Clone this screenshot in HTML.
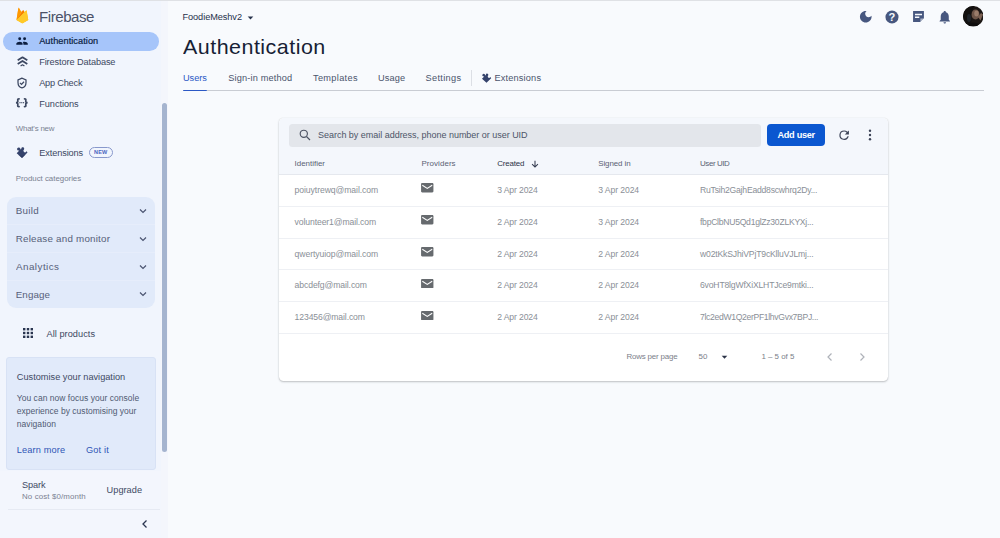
<!DOCTYPE html>
<html lang="en">
<head>
<meta charset="utf-8">
<title>Authentication - FoodieMeshv2 - Firebase console</title>
<style>
*{box-sizing:border-box;margin:0;padding:0}
html,body{width:1000px;height:538px;overflow:hidden}
body{font-family:"Liberation Sans",Arial,sans-serif;background:#f8fafd;color:#1f2a44;position:relative;font-size:9px}
.abs{position:absolute}
.t{position:absolute;white-space:nowrap;line-height:1;transform-origin:0 50%;z-index:3}
.topline{position:absolute;left:0;top:0;width:1000px;height:1px;background:#dfe1e5;z-index:5}
.side{position:absolute;left:0;top:0;width:168px;height:538px;background:#f1f5fd}
.track{position:absolute;left:161px;top:0;width:7px;height:538px;background:#f4f6fc}
.pill{position:absolute;left:2.7px;top:32px;width:156.2px;height:18.6px;border-radius:9.3px;background:#a6c5fa}
.cats{position:absolute;left:7px;top:197px;width:147.500px;height:111px;border-radius:9px;background:#e1eafa}
.catline{position:absolute;left:0;width:147.500px;height:1px;background:#e6edfb}
.scroll{position:absolute;left:161.5px;top:103px;width:5.4px;height:349px;background:#a5b4cf;border-radius:3px}
.card{position:absolute;left:6px;top:357px;width:150px;height:113px;border-radius:3px;background:#e1eafa;border:1px solid #d8e2f5}
.sfoot{position:absolute;left:0;top:471px;width:161px;height:67px;background:#f3f6fd}
.tabline{position:absolute;left:183px;top:90px;width:801px;height:1px;background:#c9ccd3}
.tabind{position:absolute;left:183px;top:89.5px;width:24px;height:1.5px;background:#2b58c5;border-radius:1.5px 1.5px 0 0}
.tcard{position:absolute;left:279px;top:118px;width:609px;height:262.800px;background:#fff;border-radius:4.500px;box-shadow:0 1px 2px rgba(60,64,67,.3),0 0 1px rgba(60,64,67,.18)}
.thead{position:absolute;left:0;top:0;width:609px;height:57px;background:#f4f7fc;border-radius:5px 5px 0 0;border-bottom:1px solid #e5e8ee}
.search{position:absolute;left:10.200px;top:5.800px;width:472px;height:23.500px;border-radius:3.500px;background:#e3e6eb}
.btn{position:absolute;left:488.200px;top:5.700px;width:58.200px;height:22.800px;border-radius:4px;background:#0b57d0}
.rowline{position:absolute;left:279px;width:609px;height:1px;background:#eef0f4}
</style>
</head>
<body>
<div class="topline"></div>
<div class="side">
<svg class="abs" style="left:16px;top:7.300px" width="12.500" height="16.700" viewBox="0 0 24 32">
<path d="M1 25 L4.500 2.200 L9.800 9.300 L13.900 6.200 L16.500 10 L20 6.600 L23.500 25 L12.200 31.300z" fill="#ffa611"/>
<path d="M1 25 L4.500 2.200 c.1-.8 1.100-1 1.500-.3 L10 9 z" fill="#ff9800"/>
<path d="M1 25 L13.200 6.600 c.3-.6 1.100-.6 1.400 0 L16.500 10 z" fill="#f57c00"/>
<path d="M1 25 L19.300 6.800 c.5-.5 1.300-.2 1.400.5 L23.500 25 13.200 31 c-.6.3-1.300.3-1.900 0 z" fill="#ffca28"/>
</svg>
<div class="pill"></div>
<svg class="abs" style="left:16px;top:36.800px" width="12" height="8" viewBox="0 0 12 8" fill="#0b1d3f"><circle cx="3.700" cy="1.800" r="1.450"/><circle cx="8.600" cy="1.800" r="1.450"/><path d="M.3 7.800 V6.800 C.3 5.400 2.400 4.700 3.700 4.700 S6.600 5.400 6.600 6.800 V7.800z"/><path d="M7.400 7.800 V6.700 C7.400 6 7.100 5.500 6.700 5.100 C7.300 4.800 8 4.700 8.600 4.700 C9.900 4.700 11.800 5.400 11.800 6.800 V7.800z"/></svg>
<svg class="abs" style="left:16.500px;top:55.800px" width="11" height="11" viewBox="0 0 11 11" fill="none" stroke="#3c4761" stroke-width="1.750" stroke-linejoin="round"><path d="M.7 4.300 L5.500 1.300 L10.300 4.300"/><path d="M.7 7.900 L5.500 4.900 L10.300 7.900"/><path d="M3.600 10 L5.500 8.800 L7.400 10" stroke-width="1.300"/></svg>
<svg class="abs" style="left:16px;top:77px" width="12" height="12" viewBox="0 0 24 24"><path fill="none" stroke="#3c4761" stroke-width="2.500" d="M12 2.200 L4 5.700 V11 c0 5 3.400 9.700 8 10.900 4.600-1.200 8-5.900 8-10.900 V5.700 z"/><path fill="none" stroke="#3c4761" stroke-width="2.500" d="M8 11.800 l3 3 5-5.300"/></svg>
<svg class="abs" style="left:15.400px;top:98.300px" width="13.600" height="9.400" viewBox="0 0 13 9" fill="none" stroke="#3c4761" stroke-width="1.600" stroke-linecap="round"><path d="M3.900 .8 C2 .8 2.700 1.600 2.700 3 C2.700 4 1.900 4.500 .9 4.500 C1.900 4.500 2.700 5 2.700 6 C2.700 7.400 2 8.200 3.900 8.200"/><path d="M9.100 .8 C11 .8 10.300 1.600 10.300 3 C10.300 4 11.100 4.500 12.100 4.500 C11.100 4.500 10.300 5 10.300 6 C10.300 7.400 11 8.200 9.100 8.200"/><g fill="#3c4761" stroke="none"><circle cx="4.800" cy="4.500" r=".65"/><circle cx="6.500" cy="4.500" r=".65"/><circle cx="8.200" cy="4.500" r=".65"/></g></svg>
<svg class="abs" style="left:12px;top:143px" width="20" height="20" viewBox="0 0 20 20"><path fill="#35436c" d="M4.700 10.200 L7.300 7.600 C5.600 7.800 4.600 6.400 5.300 5.200 C6 4 7.800 4.100 8.300 5.600 L8.600 6.500 L9.300 5.900 C9.100 4.600 10.200 3.900 11.200 4.300 C12.500 4.800 12.500 6.300 11.400 7.200 C11.600 8.800 12.400 9.600 13.300 9.400 L14.600 8.300 L15.500 9.600 L10 15 z"/><path fill="#27335a" d="M6.500 11.900 L10 15 L13.500 11.700 L10 13z" opacity=".6"/></svg>
<div class="abs" style="left:88.700px;top:147.200px;width:24px;height:10.500px;border:1px solid #8898cc;border-radius:6px;font-size:5.500px;font-weight:bold;color:#4a62c0;text-align:center;line-height:8.500px;letter-spacing:.2px">NEW</div>
<div class="cats">
<div class="catline" style="top:27px"></div>
<div class="catline" style="top:55px"></div>
<div class="catline" style="top:83px"></div>
<svg class="abs" style="left:131px;top:9px" width="10" height="10" viewBox="0 0 10 10" fill="none" stroke="#4a5470" stroke-width="1.200"><path d="M2 3.500 L5 6.500 L8 3.500"/></svg>
<svg class="abs" style="left:131px;top:36.500px" width="10" height="10" viewBox="0 0 10 10" fill="none" stroke="#4a5470" stroke-width="1.200"><path d="M2 3.500 L5 6.500 L8 3.500"/></svg>
<svg class="abs" style="left:131px;top:64.500px" width="10" height="10" viewBox="0 0 10 10" fill="none" stroke="#4a5470" stroke-width="1.200"><path d="M2 3.500 L5 6.500 L8 3.500"/></svg>
<svg class="abs" style="left:131px;top:92px" width="10" height="10" viewBox="0 0 10 10" fill="none" stroke="#4a5470" stroke-width="1.200"><path d="M2 3.500 L5 6.500 L8 3.500"/></svg>
</div>
<svg class="abs" style="left:22px;top:327px" width="12" height="12" viewBox="0 0 12 12" fill="#2a3550"><rect x="1" y="1" width="2.400" height="2.400"/><rect x="4.800" y="1" width="2.400" height="2.400"/><rect x="8.600" y="1" width="2.400" height="2.400"/><rect x="1" y="4.800" width="2.400" height="2.400"/><rect x="4.800" y="4.800" width="2.400" height="2.400"/><rect x="8.600" y="4.800" width="2.400" height="2.400"/><rect x="1" y="8.600" width="2.400" height="2.400"/><rect x="4.800" y="8.600" width="2.400" height="2.400"/><rect x="8.600" y="8.600" width="2.400" height="2.400"/></svg>
<div class="sfoot"></div><div class="card"></div>
<div class="abs" style="left:8px;top:509px;width:152px;height:1px;background:#e6eaf3"></div>
<svg class="abs" style="left:139.500px;top:519px" width="10" height="10" viewBox="0 0 10 10" fill="none" stroke="#2a3550" stroke-width="1.300"><path d="M6.500 1.500 L3 5 L6.500 8.500"/></svg>
<div class="track"></div><div class="scroll"></div>
</div>
<div class="t" id="t0" style="left:38.50px;top:9.35px;font-size:15.2px;color:#4b5268;letter-spacing:-0.450px;transform:scaleX(0.9921);">Firebase</div>
<div class="t" id="t1" style="left:39.20px;top:36.95px;font-size:9.2px;color:#0b1d3f;letter-spacing:0.059px;-webkit-text-stroke:.2px #0b1d3f;">Authentication</div>
<div class="t" id="t2" style="left:39.20px;top:57.85px;font-size:9.2px;color:#3c4761;letter-spacing:-0.108px;">Firestore Database</div>
<div class="t" id="t3" style="left:39.20px;top:78.85px;font-size:9.2px;color:#3c4761;letter-spacing:-0.207px;">App Check</div>
<div class="t" id="t4" style="left:39.20px;top:99.65px;font-size:9.2px;color:#3c4761;letter-spacing:-0.043px;">Functions</div>
<div class="t" id="t5" style="left:15.70px;top:124.62px;font-size:7.9px;color:#7a8191;letter-spacing:-0.194px;">What&#x27;s new</div>
<div class="t" id="t6" style="left:39.20px;top:148.55px;font-size:9.2px;color:#3c4761;letter-spacing:-0.106px;">Extensions</div>
<div class="t" id="t7" style="left:15.70px;top:175.22px;font-size:7.9px;color:#7a8191;letter-spacing:-0.017px;">Product categories</div>
<div class="t" id="t8" style="left:15.70px;top:205.64px;font-size:9.8px;color:#566079;letter-spacing:0.301px;">Build</div>
<div class="t" id="t9" style="left:15.70px;top:233.84px;font-size:9.8px;color:#566079;letter-spacing:0.216px;">Release and monitor</div>
<div class="t" id="t10" style="left:15.70px;top:261.54px;font-size:9.8px;color:#566079;letter-spacing:0.450px;transform:scaleX(1.0046);">Analytics</div>
<div class="t" id="t11" style="left:15.70px;top:289.64px;font-size:9.8px;color:#566079;letter-spacing:0.104px;">Engage</div>
<div class="t" id="t12" style="left:46.50px;top:329.65px;font-size:9.2px;color:#3c4761;letter-spacing:0.044px;">All products</div>
<div class="t" id="t13" style="left:16.80px;top:373.15px;font-size:9.2px;color:#3e4963;letter-spacing:0.006px;">Customise your navigation</div>
<div class="t" id="t14" style="left:16.80px;top:393.61px;font-size:8.5px;color:#505a72;letter-spacing:0.027px;">You can now focus your console</div>
<div class="t" id="t15" style="left:16.80px;top:406.81px;font-size:8.5px;color:#505a72;letter-spacing:0.019px;">experience by customising your</div>
<div class="t" id="t16" style="left:16.80px;top:419.81px;font-size:8.5px;color:#505a72;letter-spacing:0.048px;">navigation</div>
<div class="t" id="t17" style="left:16.80px;top:446.05px;font-size:9.2px;color:#2f55b5;letter-spacing:0.135px;">Learn more</div>
<div class="t" id="t18" style="left:86.00px;top:446.05px;font-size:9.2px;color:#2f55b5;letter-spacing:0.146px;">Got it</div>
<div class="t" id="t19" style="left:22.00px;top:480.75px;font-size:9.2px;color:#3e4963;letter-spacing:-0.129px;">Spark</div>
<div class="t" id="t20" style="left:22.00px;top:492.92px;font-size:7.9px;color:#7a8191;letter-spacing:0.124px;">No cost $0/month</div>
<div class="t" id="t21" style="left:106.60px;top:486.15px;font-size:9.2px;color:#3e4963;letter-spacing:0.025px;">Upgrade</div>
<div class="t" id="t22" style="left:182.50px;top:13.25px;font-size:9.2px;color:#27324b;letter-spacing:-0.070px;">FoodieMeshv2</div>
<div class="t" id="t23" style="left:182.50px;top:37.16px;font-size:20.4px;color:#171e35;letter-spacing:0.450px;transform:scaleX(1.0534);">Authentication</div>
<div class="t" id="t24" style="left:183.00px;top:74.25px;font-size:9.2px;color:#2b58c5;letter-spacing:-0.050px;">Users</div>
<div class="t" id="t25" style="left:228.20px;top:74.25px;font-size:9.2px;color:#4a546c;letter-spacing:0.169px;">Sign-in method</div>
<div class="t" id="t26" style="left:313.00px;top:74.25px;font-size:9.2px;color:#4a546c;letter-spacing:0.328px;">Templates</div>
<div class="t" id="t27" style="left:378.00px;top:74.25px;font-size:9.2px;color:#4a546c;letter-spacing:0.109px;">Usage</div>
<div class="t" id="t28" style="left:425.50px;top:74.25px;font-size:9.2px;color:#4a546c;letter-spacing:0.328px;">Settings</div>
<div class="t" id="t29" style="left:494.50px;top:74.25px;font-size:9.2px;color:#4a546c;letter-spacing:0.172px;">Extensions</div>
<div class="t" id="t30" style="left:318.00px;top:131.35px;font-size:9.0px;color:#4d5568;letter-spacing:-0.021px;">Search by email address, phone number or user UID</div>
<div class="t" id="t31" style="left:777.40px;top:131.25px;font-size:9.2px;color:#ffffff;letter-spacing:-0.290px;font-weight:bold;">Add user</div>
<div class="t" id="t32" style="left:294.60px;top:159.89px;font-size:7.95px;color:#5a6274;letter-spacing:-0.006px;">Identifier</div>
<div class="t" id="t33" style="left:421.40px;top:159.89px;font-size:7.95px;color:#5a6274;letter-spacing:0.084px;">Providers</div>
<div class="t" id="t34" style="left:497.20px;top:159.89px;font-size:7.95px;color:#2c3448;letter-spacing:-0.175px;">Created</div>
<div class="t" id="t35" style="left:598.20px;top:159.89px;font-size:7.95px;color:#5a6274;letter-spacing:-0.089px;">Signed in</div>
<div class="t" id="t36" style="left:700.00px;top:159.89px;font-size:7.95px;color:#5a6274;letter-spacing:-0.406px;">User UID</div>
<div class="t" id="t37" style="left:294.60px;top:186.13px;font-size:8.65px;color:#8a8f97;letter-spacing:-0.077px;">poiuytrewq@mail.com</div>
<div class="t" id="t38" style="left:497.20px;top:186.13px;font-size:8.65px;color:#8a8f97;letter-spacing:-0.126px;">3 Apr 2024</div>
<div class="t" id="t39" style="left:598.20px;top:186.13px;font-size:8.65px;color:#8a8f97;letter-spacing:-0.082px;">3 Apr 2024</div>
<div class="t" id="t40" style="left:700.00px;top:186.13px;font-size:8.65px;color:#8a8f97;letter-spacing:-0.227px;">RuTsih2GajhEadd8scwhrq2Dy...</div>
<div class="t" id="t41" style="left:294.60px;top:217.93px;font-size:8.65px;color:#8a8f97;letter-spacing:-0.108px;">volunteer1@mail.com</div>
<div class="t" id="t42" style="left:497.20px;top:217.93px;font-size:8.65px;color:#8a8f97;letter-spacing:-0.126px;">2 Apr 2024</div>
<div class="t" id="t43" style="left:598.20px;top:217.93px;font-size:8.65px;color:#8a8f97;letter-spacing:-0.082px;">3 Apr 2024</div>
<div class="t" id="t44" style="left:700.00px;top:217.93px;font-size:8.65px;color:#8a8f97;letter-spacing:-0.277px;">fbpClbNU5Qd1glZz30ZLKYXj...</div>
<div class="t" id="t45" style="left:294.60px;top:249.73px;font-size:8.65px;color:#8a8f97;letter-spacing:-0.077px;">qwertyuiop@mail.com</div>
<div class="t" id="t46" style="left:497.20px;top:249.73px;font-size:8.65px;color:#8a8f97;letter-spacing:-0.126px;">2 Apr 2024</div>
<div class="t" id="t47" style="left:598.20px;top:249.73px;font-size:8.65px;color:#8a8f97;letter-spacing:-0.082px;">2 Apr 2024</div>
<div class="t" id="t48" style="left:700.00px;top:249.73px;font-size:8.65px;color:#8a8f97;letter-spacing:-0.178px;">w02tKkSJhiVPjT9cKlluVJLmj...</div>
<div class="t" id="t49" style="left:294.60px;top:281.43px;font-size:8.65px;color:#8a8f97;letter-spacing:-0.104px;">abcdefg@mail.com</div>
<div class="t" id="t50" style="left:497.20px;top:281.43px;font-size:8.65px;color:#8a8f97;letter-spacing:-0.126px;">2 Apr 2024</div>
<div class="t" id="t51" style="left:598.20px;top:281.43px;font-size:8.65px;color:#8a8f97;letter-spacing:-0.082px;">2 Apr 2024</div>
<div class="t" id="t52" style="left:700.00px;top:281.43px;font-size:8.65px;color:#8a8f97;letter-spacing:-0.184px;">6voHT8lgWfXiXLHTJce9mtki...</div>
<div class="t" id="t53" style="left:294.60px;top:313.23px;font-size:8.65px;color:#8a8f97;letter-spacing:-0.118px;">123456@mail.com</div>
<div class="t" id="t54" style="left:497.20px;top:313.23px;font-size:8.65px;color:#8a8f97;letter-spacing:-0.126px;">2 Apr 2024</div>
<div class="t" id="t55" style="left:598.20px;top:313.23px;font-size:8.65px;color:#8a8f97;letter-spacing:-0.082px;">2 Apr 2024</div>
<div class="t" id="t56" style="left:700.00px;top:313.23px;font-size:8.65px;color:#8a8f97;letter-spacing:-0.338px;">7lc2edW1Q2erPF1lhvGvx7BPJ...</div>
<div class="t" id="t57" style="left:626.40px;top:352.69px;font-size:7.95px;color:#7b808a;letter-spacing:-0.183px;">Rows per page</div>
<div class="t" id="t58" style="left:698.40px;top:352.69px;font-size:7.95px;color:#7b808a;letter-spacing:0.156px;">50</div>
<div class="t" id="t59" style="left:761.40px;top:352.69px;font-size:7.95px;color:#7b808a;letter-spacing:-0.012px;">1 – 5 of 5</div>
<svg class="abs" style="left:246.500px;top:15.800px" width="7" height="4" viewBox="0 0 8 5"><path fill="#27324b" d="M.5 .5 h7 L4 4.500z"/></svg>
<div class="abs" style="left:470.800px;top:69.500px;width:1px;height:16px;background:#dcdfe5"></div>
<svg class="abs" style="left:478.200px;top:70.200px" width="17" height="17" viewBox="0 0 20 20"><path fill="#35436c" d="M4.700 10.200 L7.300 7.600 C5.600 7.800 4.600 6.400 5.300 5.200 C6 4 7.800 4.100 8.300 5.600 L8.600 6.500 L9.300 5.900 C9.100 4.600 10.200 3.900 11.200 4.300 C12.500 4.800 12.500 6.300 11.400 7.200 C11.600 8.800 12.400 9.600 13.300 9.400 L14.600 8.300 L15.500 9.600 L10 15 z"/></svg>
<div class="tabline"></div><div class="tabind"></div>
<svg class="abs" style="left:858.300px;top:9.200px" width="15.500" height="15.500" viewBox="0 0 24 24"><path fill="#47577f" d="M12 3c-4.970 0-9 4.030-9 9s4.030 9 9 9 9-4.030 9-9c0-.46-.04-.92-.1-1.360-.98 1.370-2.580 2.260-4.400 2.260-2.980 0-5.400-2.420-5.400-5.400 0-1.810.89-3.420 2.260-4.400-.44-.06-.9-.1-1.360-.1z"/></svg>
<svg class="abs" style="left:885px;top:10px" width="14" height="14" viewBox="0 0 24 24"><circle cx="12" cy="12" r="11.200" fill="#47577f"/><text x="12" y="18.700" text-anchor="middle" font-family="Liberation Sans, sans-serif" font-weight="bold" font-size="19" fill="#f8fafd">?</text></svg>
<svg class="abs" style="left:912px;top:10px" width="13" height="13" viewBox="0 0 24 24"><path fill="#47577f" d="M2 2 h20 v13 l-7 7 H2 z"/><path fill="#f8fafd" d="M5.500 7 h13 v2.600 h-13 z M5.500 12 h8 v2.600 h-8 z"/><path fill="#f8fafd" d="M15.500 21.500 v-6 h6 z" opacity=".55"/></svg>
<svg class="abs" style="left:938.500px;top:9.700px" width="11.500" height="14.500" viewBox="0 0 20 24"><path fill="#47577f" d="M10 23 c1.200 0 2.200-1 2.200-2.200 H7.800 c0 1.200 1 2.200 2.200 2.200 z M17 16.500 V10.500 c0-3.400-1.800-6.200-5-7 V2.800 c0-1-.9-1.800-2-1.800 s-2 .8-2 1.800 v.7 c-3.200 .8-5 3.600-5 7 v6 L1 18.500 v1.100 h18 v-1.100 z"/></svg>
<svg class="abs" style="left:962.700px;top:6px" width="20.500" height="20.500" viewBox="0 0 41 41"><defs><clipPath id="av"><circle cx="20.500" cy="20.500" r="20.500"/></clipPath></defs><g clip-path="url(#av)"><rect width="41" height="41" fill="#1b1614"/><ellipse cx="25" cy="17" rx="8" ry="10" fill="#6e5548"/><ellipse cx="27" cy="15" rx="4.500" ry="6" fill="#9a7c6a"/><path d="M0 0 H24 C17 6 15 16 17 30 L14 41 H0z" fill="#12100f"/><path d="M30 22 l6 -8 4 3 -5 12z" fill="#7d6254"/><path d="M8 41 C12 30 30 30 36 41z" fill="#0f0d0d"/><ellipse cx="12" cy="24" rx="4" ry="8" fill="#27303a" opacity=".6"/></g></svg>
<div class="tcard">
<div class="thead">
<div class="search"><svg class="abs" style="left:9.600px;top:5.300px" width="12" height="12" viewBox="0 0 12 12" fill="none" stroke="#4d5464" stroke-width="1.150"><circle cx="4.800" cy="4.800" r="3.600"/><path d="M7.500 7.500 L11 11"/></svg></div>
<div class="btn"></div>
<svg class="abs" style="left:557.600px;top:10px" width="14.300" height="14.300" viewBox="0 0 24 24"><path fill="#3c4357" d="M17.650 6.350 A7.950 7.950 0 0 0 12 4 a8 8 0 1 0 7.730 10 h-2.080 A6 6 0 1 1 12 6 c1.660 0 3.140.69 4.220 1.780 L13 11 h7 V4 z"/></svg>
<svg class="abs" style="left:588.600px;top:11.300px" width="4" height="12" viewBox="0 0 4 12" fill="#3c4357"><circle cx="2" cy="1.700" r="1.200"/><circle cx="2" cy="6" r="1.200"/><circle cx="2" cy="10.300" r="1.200"/></svg>
<svg class="abs" style="left:251.500px;top:41px" width="8" height="9" viewBox="0 0 8 9" fill="none" stroke="#343c50" stroke-width="1.050"><path d="M4 1.700 V8 M1.100 5.100 L4 8 L6.900 5.100"/></svg>
</div>
<svg class="abs" style="left:441.500px;top:236.500px" width="7" height="4.500" viewBox="0 0 8 5"><path fill="#2c3448" d="M.8 .8 h6.400 L4 4.200z"/></svg>
<svg class="abs" style="left:546px;top:234px" width="10" height="10" viewBox="0 0 10 10" fill="none" stroke="#aeb2b9" stroke-width="1.200"><path d="M6.500 1.500 L3 5 L6.500 8.500"/></svg>
<svg class="abs" style="left:578px;top:234px" width="10" height="10" viewBox="0 0 10 10" fill="none" stroke="#aeb2b9" stroke-width="1.200"><path d="M3.500 1.500 L7 5 L3.500 8.500"/></svg>
</div>
<div class="rowline" style="top:205.7px"></div>
<div class="rowline" style="top:237.5px"></div>
<div class="rowline" style="top:269.3px"></div>
<div class="rowline" style="top:301.0px"></div>
<div class="rowline" style="top:332.8px"></div>
<svg class="abs" style="left:421.400px;top:183.4px" width="12.500" height="9.500" viewBox="0 0 13 10"><path fill="#666a6e" d="M1.200 0 h10.600 c.7 0 1.200.5 1.200 1.200 v7.600 c0 .7-.5 1.200-1.200 1.200 H1.200 C.5 10 0 9.500 0 8.800 V1.200 C0 .5.5 0 1.200 0z"/><path fill="none" stroke="#fff" stroke-width="1.100" d="M1.300 2.300 L6.500 5.600 L11.700 2.300"/></svg>
<svg class="abs" style="left:421.400px;top:215.2px" width="12.500" height="9.500" viewBox="0 0 13 10"><path fill="#666a6e" d="M1.200 0 h10.600 c.7 0 1.200.5 1.200 1.200 v7.600 c0 .7-.5 1.200-1.200 1.200 H1.200 C.5 10 0 9.500 0 8.800 V1.200 C0 .5.5 0 1.200 0z"/><path fill="none" stroke="#fff" stroke-width="1.100" d="M1.300 2.300 L6.500 5.600 L11.700 2.300"/></svg>
<svg class="abs" style="left:421.400px;top:247.0px" width="12.500" height="9.500" viewBox="0 0 13 10"><path fill="#666a6e" d="M1.200 0 h10.600 c.7 0 1.200.5 1.200 1.200 v7.600 c0 .7-.5 1.200-1.200 1.200 H1.200 C.5 10 0 9.500 0 8.800 V1.200 C0 .5.5 0 1.200 0z"/><path fill="none" stroke="#fff" stroke-width="1.100" d="M1.300 2.300 L6.500 5.600 L11.700 2.300"/></svg>
<svg class="abs" style="left:421.400px;top:278.7px" width="12.500" height="9.500" viewBox="0 0 13 10"><path fill="#666a6e" d="M1.200 0 h10.600 c.7 0 1.200.5 1.200 1.200 v7.600 c0 .7-.5 1.200-1.200 1.200 H1.200 C.5 10 0 9.500 0 8.800 V1.200 C0 .5.5 0 1.200 0z"/><path fill="none" stroke="#fff" stroke-width="1.100" d="M1.300 2.300 L6.500 5.600 L11.700 2.300"/></svg>
<svg class="abs" style="left:421.400px;top:310.5px" width="12.500" height="9.500" viewBox="0 0 13 10"><path fill="#666a6e" d="M1.200 0 h10.600 c.7 0 1.200.5 1.200 1.200 v7.600 c0 .7-.5 1.200-1.200 1.200 H1.200 C.5 10 0 9.500 0 8.800 V1.200 C0 .5.5 0 1.200 0z"/><path fill="none" stroke="#fff" stroke-width="1.100" d="M1.300 2.300 L6.500 5.600 L11.700 2.300"/></svg>

</body>
</html>
